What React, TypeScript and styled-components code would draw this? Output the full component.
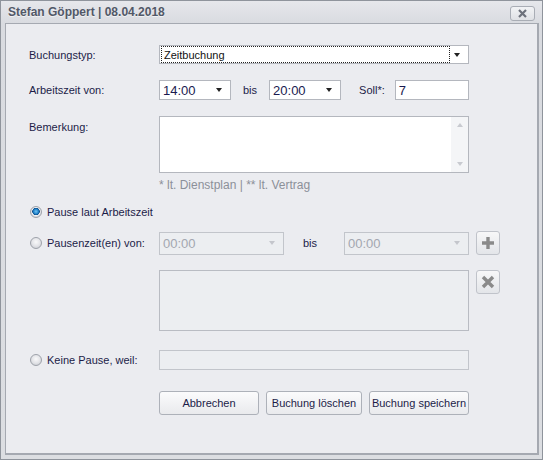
import React from 'react';
import styled, { createGlobalStyle } from 'styled-components';

const GlobalStyle = createGlobalStyle`
  html, body {
    margin: 0;
    padding: 0;
    background: #ffffff;
  }
  body {
    font-family: "Liberation Sans", Arial, sans-serif;
    font-size: 11px;
    color: #1c1c48;
  }
`;

const Window = styled.div`
  box-sizing: border-box;
  width: 543px;
  height: 460px;
  display: flex;
  flex-direction: column;
  border: 1px solid #8f949c;
  padding: 0 3px 4px 4px;
  background: linear-gradient(#e6e7eb, #d9dbe0 22px, #dcdee2);
`;

const TitleBar = styled.div`
  height: 22px;
  display: flex;
  align-items: center;
  justify-content: space-between;
  padding: 0 4px 0 3px;
`;

const Title = styled.div`
  font-size: 12px;
  font-weight: bold;
  color: #515867;
  text-shadow: 0 1px 0 rgba(255, 255, 255, 0.6);
`;

const CloseButton = styled.div`
  box-sizing: border-box;
  width: 25px;
  height: 15px;
  margin-top: 2px;
  border: 1px solid #a9adb5;
  border-radius: 3px;
  background: linear-gradient(#f2f3f5, #dfe1e5);
  display: flex;
  align-items: center;
  justify-content: center;
`;

const Panel = styled.div`
  flex: 1;
  border: 1px solid #a5a9b1;
  border-right-width: 2px;
  border-bottom-width: 2px;
  background: #ebecf0;
  padding: 21px 0 0 23px;
  display: flex;
  flex-direction: column;
`;

const Row = styled.div<{ $top: number; $h: number; $align?: string }>`
  display: grid;
  grid-template-columns: 123px 310px 24px;
  column-gap: 7px;
  margin-top: ${(p) => p.$top}px;
  height: ${(p) => p.$h}px;
  align-items: ${(p) => p.$align || 'center'};
`;

const Label = styled.div<{ $pt?: number }>`
  font-size: 11px;
  color: #1c1c48;
  white-space: nowrap;
  padding-top: ${(p) => p.$pt || 0}px;
`;

const FieldLine = styled.div`
  display: flex;
  align-items: center;
  height: 100%;
`;

const Select = styled.div<{ $w: number; $h?: number; $disabled?: boolean }>`
  box-sizing: border-box;
  position: relative;
  width: ${(p) => p.$w}px;
  height: ${(p) => p.$h || 20}px;
  border: 1px solid ${(p) => (p.$disabled ? '#c2c5cb' : '#b4b7be')};
  background: ${(p) => (p.$disabled ? '#eceef1' : '#ffffff')};
  display: flex;
  align-items: center;
  padding-left: 3px;
  font-size: 13px;
  color: ${(p) => (p.$disabled ? '#a3a7b0' : '#1a1a50')};
`;

const FocusText = styled.div`
  box-sizing: border-box;
  flex: 1;
  height: 100%;
  margin: 0 18px 0 -2px;
  border: 1px dotted #222;
  padding-left: 2px;
  font-size: 11px;
  display: flex;
  align-items: center;
  color: #111;
`;

const Arrow = styled.span<{ $disabled?: boolean; $right?: number }>`
  position: absolute;
  right: ${(p) => p.$right ?? 8}px;
  top: 50%;
  margin-top: -2px;
  width: 0;
  height: 0;
  border-left: 3.5px solid transparent;
  border-right: 3.5px solid transparent;
  border-top: 4px solid ${(p) => (p.$disabled ? '#c4c6cc' : '#222')};
`;

const InlineText = styled.span<{ $ml: number; $mr: number }>`
  margin-left: ${(p) => p.$ml}px;
  margin-right: ${(p) => p.$mr}px;
  font-size: 11px;
  color: #1c1c48;
`;

const TextInput = styled.div<{ $w?: number; $disabled?: boolean }>`
  box-sizing: border-box;
  width: ${(p) => (p.$w ? `${p.$w}px` : 'auto')};
  flex: ${(p) => (p.$w ? 'none' : '1')};
  height: 20px;
  border: 1px solid ${(p) => (p.$disabled ? '#c2c5cb' : '#b4b7be')};
  background: ${(p) => (p.$disabled ? '#eceef1' : '#ffffff')};
  display: flex;
  align-items: center;
  padding-left: 3px;
  font-size: 13px;
  color: #1a1a50;
`;

const TextArea = styled.div`
  box-sizing: border-box;
  height: 57px;
  border: 1px solid #b4b7be;
  background: #ffffff;
  display: flex;
  justify-content: flex-end;
`;

const ScrollBar = styled.div`
  width: 17px;
  background: #f4f5f7;
  display: flex;
  flex-direction: column;
  justify-content: space-between;
  align-items: center;
  padding: 6px 0;
`;

const ScrollArrow = styled.span<{ $up?: boolean }>`
  width: 0;
  height: 0;
  border-left: 3.5px solid transparent;
  border-right: 3.5px solid transparent;
  ${(p) =>
    p.$up ? 'border-bottom: 4px solid #c8cad0;' : 'border-top: 4px solid #c8cad0;'}
`;

const Footnote = styled.div`
  margin: 5px 0 0 130px;
  font-size: 12px;
  line-height: 14px;
  color: #8b9099;
`;

const RadioRow = styled.label<{ $span?: boolean }>`
  display: flex;
  align-items: center;
  padding-left: 1px;
  font-size: 11px;
  color: #1c1c48;
  white-space: nowrap;
  ${(p) => (p.$span ? 'grid-column: 1 / -1;' : '')}
`;

const Radio = styled.span<{ $checked?: boolean }>`
  box-sizing: border-box;
  width: 12px;
  height: 12px;
  border-radius: 50%;
  border: 1px solid #9ea2aa;
  margin-right: 5px;
  background: ${(p) =>
    p.$checked
      ? 'radial-gradient(circle at 50% 45%, #6fc3f3 0, #1f7fc6 2.5px, #0e4d8a 3.5px, #f1f2f4 4px, #d8dadf 5px)'
      : 'radial-gradient(circle at 50% 40%, #f9f9fa 0, #e3e4e8 4px, #d2d4d9 6px)'};
`;

const ListBox = styled.div`
  box-sizing: border-box;
  height: 61px;
  border: 1px solid #b9bcc3;
  background: #eceef1;
`;

const IconButton = styled.div`
  box-sizing: border-box;
  width: 24px;
  height: 24px;
  border: 1px solid #c0c3ca;
  border-radius: 3px;
  background: linear-gradient(#f7f7f8, #e3e5e9);
  display: flex;
  align-items: center;
  justify-content: center;
`;

const ButtonBar = styled.div`
  display: flex;
  gap: 7px;
  margin: 21px 0 0 130px;
`;

const Button = styled.button<{ $w: number }>`
  box-sizing: border-box;
  width: ${(p) => p.$w}px;
  height: 24px;
  border: 1px solid #adb1b9;
  border-radius: 3px;
  background: linear-gradient(#fbfbfc, #e9eaed);
  font-family: "Liberation Sans", Arial, sans-serif;
  font-size: 11px;
  color: #1c1c48;
  padding: 0;
`;

const CloseIcon = () => (
  <svg width="11" height="9" viewBox="0 0 11 9">
    <path d="M2 1 L9 8 M9 1 L2 8" stroke="#6d717b" strokeWidth="2.2" />
  </svg>
);

const PlusIcon = () => (
  <svg width="14" height="14" viewBox="0 0 14 14">
    <path d="M7 1 V13 M1 7 H13" stroke="#8a8a8a" strokeWidth="3.4" />
  </svg>
);

const CrossIcon = () => (
  <svg width="14" height="14" viewBox="0 0 14 14">
    <path d="M2 2 L12 12 M12 2 L2 12" stroke="#8a8a8a" strokeWidth="3.4" />
  </svg>
);

export default function App() {
  return (
    <>
      <GlobalStyle />
      <Window>
        <TitleBar>
          <Title>Stefan Göppert | 08.04.2018</Title>
          <CloseButton>
            <CloseIcon />
          </CloseButton>
        </TitleBar>
        <Panel>
          <Row $top={0} $h={19}>
            <Label>Buchungstyp:</Label>
            <Select $w={310} $h={19}>
              <FocusText>Zeitbuchung</FocusText>
              <Arrow />
            </Select>
          </Row>

          <Row $top={16} $h={20}>
            <Label>Arbeitszeit von:</Label>
            <FieldLine>
              <Select $w={72}>
                14:00
                <Arrow $right={8} />
              </Select>
              <InlineText $ml={12} $mr={12}>bis</InlineText>
              <Select $w={72}>
                20:00
                <Arrow $right={8} />
              </Select>
              <InlineText $ml={18} $mr={10}>Soll*:</InlineText>
              <TextInput>7</TextInput>
            </FieldLine>
          </Row>

          <Row $top={16} $h={57} $align="start">
            <Label $pt={5}>Bemerkung:</Label>
            <TextArea>
              <ScrollBar>
                <ScrollArrow $up />
                <ScrollArrow />
              </ScrollBar>
            </TextArea>
          </Row>

          <Footnote>* lt. Dienstplan | ** lt. Vertrag</Footnote>

          <Row $top={13} $h={14}>
            <RadioRow $span>
              <Radio $checked />
              Pause laut Arbeitszeit
            </RadioRow>
          </Row>

          <Row $top={12} $h={24}>
            <RadioRow>
              <Radio />
              Pausenzeit(en) von:
            </RadioRow>
            <FieldLine>
              <Select $w={125} $h={23} $disabled>
                00:00
                <Arrow $disabled $right={8} />
              </Select>
              <InlineText $ml={19} $mr={27}>bis</InlineText>
              <Select $w={125} $h={23} $disabled>
                00:00
                <Arrow $disabled $right={8} />
              </Select>
            </FieldLine>
            <IconButton>
              <PlusIcon />
            </IconButton>
          </Row>

          <Row $top={15} $h={61} $align="start">
            <span />
            <ListBox />
            <IconButton>
              <CrossIcon />
            </IconButton>
          </Row>

          <Row $top={19} $h={20}>
            <RadioRow>
              <Radio />
              Keine Pause, weil:
            </RadioRow>
            <TextInput $w={310} $disabled />
          </Row>

          <ButtonBar>
            <Button $w={100}>Abbrechen</Button>
            <Button $w={96}>Buchung löschen</Button>
            <Button $w={100}>Buchung speichern</Button>
          </ButtonBar>
        </Panel>
      </Window>
    </>
  );
}
